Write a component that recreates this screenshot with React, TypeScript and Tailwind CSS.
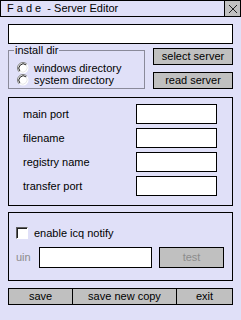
import React from 'react';

const Radio: React.FC<{ label: string }> = ({ label }) => (
  <div className="flex items-center h-[12px]">
    <svg width="12" height="12" viewBox="0 0 12 12" className="shrink-0">
      <circle cx="6" cy="6" r="5.5" fill="#ffffff" />
      <path d="M2.1 9.9 A5.5 5.5 0 0 1 9.9 2.1" stroke="#808080" strokeWidth="1" fill="none" />
      <path d="M2.9 9.1 A4.4 4.4 0 0 1 9.1 2.9" stroke="#202020" strokeWidth="1" fill="none" />
      <path d="M9.1 2.9 A4.4 4.4 0 0 1 2.9 9.1" stroke="#e8e8e8" strokeWidth="1" fill="none" />
    </svg>
    <span className="ml-[5px] leading-[12px]">{label}</span>
  </div>
);

const Field: React.FC<{ label: string }> = ({ label }) => (
  <div className="flex items-center justify-between h-[20px]">
    <span>{label}</span>
    <div className="w-[81px] h-[20px] bg-white border border-black" />
  </div>
);

export default function App() {
  return (
    <div
      className="w-[241px] h-[320px] bg-[#e0e0f8] text-black text-[11px] leading-[13px] overflow-hidden"
      style={{ fontFamily: '"Liberation Sans", Arial, sans-serif' }}
    >
      <div className="flex items-stretch h-[17px] border border-black">
        <div className="flex-1 pl-[6px] flex items-center whitespace-pre text-[11px]">F a d e  - Server Editor</div>
        <div className="w-[16px] bg-[#c0c0c0] border-l border-black flex items-center justify-center">
          <svg width="10" height="10" viewBox="0 0 10 10">
            <path d="M1 1 L9 9 M9 1 L1 9" stroke="#202020" strokeWidth="1" />
          </svg>
        </div>
      </div>

      <div className="px-[8px]">
        <div className="mt-[7px] h-[20px] bg-white border border-black" />

        <div className="flex justify-between items-start mt-[4px]">
          <div className="relative mt-[2px] w-[137px] h-[39px] border border-[#8a8a9a] pl-[8px] pt-[11px] flex flex-col gap-[0px]">
            <span className="absolute left-[5px] -top-[7px] px-[1px] bg-[#e0e0f8]">install dir</span>
            <Radio label="windows directory" />
            <Radio label="system directory" />
          </div>
          <div className="flex flex-col gap-[7px]">
            <button className="w-[80px] h-[17px] bg-[#c0c0c0] border border-black leading-[15px]">select server</button>
            <button className="w-[80px] h-[17px] bg-[#c0c0c0] border border-black leading-[15px]">read server</button>
          </div>
        </div>

        <div className="mt-[8px] h-[109px] border border-black pt-[6px] pl-[14px] pr-[15px] flex flex-col gap-[4px]">
          <Field label="main port" />
          <Field label="filename" />
          <Field label="registry name" />
          <Field label="transfer port" />
        </div>

        <div className="mt-[6px] h-[69px] border border-black pt-[14px] pl-[7px] pr-[7px]">
          <div className="flex items-center h-[12px]">
            <span className="w-[12px] h-[12px] bg-white border border-t-[#606060] border-l-[#606060] border-r-white border-b-white shadow-[inset_1px_1px_0_#202020]" />
            <span className="ml-[6px]">enable icq notify</span>
          </div>
          <div className="flex items-center mt-[8px]">
            <span className="w-[23px] text-[#8c8c8c]">uin</span>
            <div className="w-[113px] h-[21px] bg-white border border-black" />
            <button className="ml-[7px] w-[65px] h-[21px] bg-[#c0c0c0] border border-black text-[#8c8c8c]">test</button>
          </div>
        </div>

        <div className="mt-[7px] h-[17px] flex border border-black bg-[#c0c0c0] leading-[15px]">
          <button className="w-[63px] text-center">save</button>
          <button className="w-[104px] border-l border-black text-center">save new copy</button>
          <button className="flex-1 border-l border-black text-center">exit</button>
        </div>
      </div>
    </div>
  );
}
